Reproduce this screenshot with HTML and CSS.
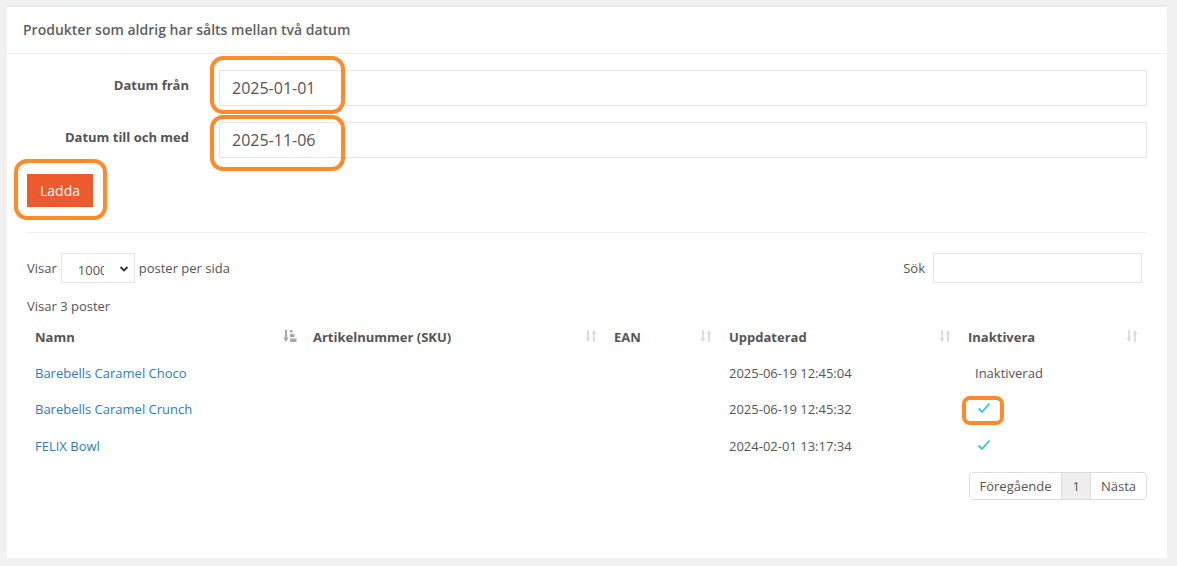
FILE: index.html
```html
<!DOCTYPE html>
<html lang="sv">
<head>
<meta charset="utf-8">
<title>Produkter som aldrig har sålts</title>
<link rel="stylesheet" href="styles.css">
</head>
<body>
<div class="portlet">
  <div class="portlet-title">Produkter som aldrig har sålts mellan två datum</div>
  <div class="portlet-body">
    <form class="form">
      <label class="form-label">Datum från</label>
      <div class="form-input">2025-01-01</div>
      <label class="form-label">Datum till och med</label>
      <div class="form-input">2025-11-06</div>
    </form>
    <div class="actions"><button class="btn" type="button">Ladda</button></div>
    <hr class="sep">
    <div class="toolbar">
      <div class="length">
        <span>Visar</span>
        <div class="select"><span class="select-val">1000</span>
          <svg class="chev" width="10" height="8" viewBox="0 0 10 8"><path d="M1.5 2 L5 5.5 L8.5 2" fill="none" stroke="#333" stroke-width="1.8"/></svg>
        </div>
        <span>poster per sida</span>
      </div>
      <div class="search"><span>Sök</span><div class="search-input"></div></div>
    </div>
    <div class="info">Visar 3 poster</div>
    <table class="table">
      <thead>
        <tr>
          <th class="c-name">Namn<svg class="sort active" width="14" height="14" viewBox="0 0 14 14"><path d="M3 1 V11" stroke="#a8a8a8" stroke-width="2.2"/><path d="M0.3 8.5 L3 13 L5.7 8.5 Z" fill="#a8a8a8"/><rect x="7" y="1" width="2.5" height="2.5" fill="#a8a8a8"/><rect x="7" y="5" width="4.5" height="3" fill="#a8a8a8"/><rect x="7" y="9.5" width="6.5" height="3.5" fill="#a8a8a8"/></svg></th>
          <th class="c-sku">Artikelnummer (SKU)<svg class="sort" width="14" height="14" viewBox="0 0 14 14"><path d="M4 1 V12" stroke="#ddd" stroke-width="2"/><path d="M1.5 9 L4 13 L6.5 9 Z" fill="#ddd"/><path d="M10 2 V13" stroke="#ddd" stroke-width="2"/><path d="M7.5 5 L10 1 L12.5 5 Z" fill="#ddd"/></svg></th>
          <th class="c-ean">EAN<svg class="sort" width="14" height="14" viewBox="0 0 14 14"><path d="M4 1 V12" stroke="#ddd" stroke-width="2"/><path d="M1.5 9 L4 13 L6.5 9 Z" fill="#ddd"/><path d="M10 2 V13" stroke="#ddd" stroke-width="2"/><path d="M7.5 5 L10 1 L12.5 5 Z" fill="#ddd"/></svg></th>
          <th class="c-upd">Uppdaterad<svg class="sort" width="14" height="14" viewBox="0 0 14 14"><path d="M4 1 V12" stroke="#ddd" stroke-width="2"/><path d="M1.5 9 L4 13 L6.5 9 Z" fill="#ddd"/><path d="M10 2 V13" stroke="#ddd" stroke-width="2"/><path d="M7.5 5 L10 1 L12.5 5 Z" fill="#ddd"/></svg></th>
          <th class="c-ina">Inaktivera<svg class="sort" width="14" height="14" viewBox="0 0 14 14"><path d="M4 1 V12" stroke="#ddd" stroke-width="2"/><path d="M1.5 9 L4 13 L6.5 9 Z" fill="#ddd"/><path d="M10 2 V13" stroke="#ddd" stroke-width="2"/><path d="M7.5 5 L10 1 L12.5 5 Z" fill="#ddd"/></svg></th>
        </tr>
      </thead>
      <tbody>
        <tr><td><a href="#">Barebells Caramel Choco</a></td><td></td><td></td><td>2025-06-19 12:45:04</td><td><span class="status">Inaktiverad</span></td></tr>
        <tr><td><a href="#">Barebells Caramel Crunch</a></td><td></td><td></td><td>2025-06-19 12:45:32</td><td><span class="status"><svg class="check" width="14" height="12" viewBox="0 0 14 12"><path d="M1.5 6.5 L5 10 L12.5 1.5" fill="none" stroke="#36c6d3" stroke-width="1.8"/></svg></span></td></tr>
        <tr><td><a href="#">FELIX Bowl</a></td><td></td><td></td><td>2024-02-01 13:17:34</td><td><span class="status"><svg class="check" width="14" height="12" viewBox="0 0 14 12"><path d="M1.5 6.5 L5 10 L12.5 1.5" fill="none" stroke="#36c6d3" stroke-width="1.8"/></svg></span></td></tr>
      </tbody>
    </table>
    <div class="pager">
      <div class="pagination"><span class="pg">Föregående</span><span class="pg cur">1</span><span class="pg">Nästa</span></div>
    </div>
  </div>
  <div class="annot a1"></div>
  <div class="annot a2"></div>
  <div class="annot a3"></div>
  <div class="annot a4"></div>
</div>
</body>
</html>
```
FILE: styles.css
```css
* { box-sizing: border-box; }
html, body { margin: 0; padding: 0; }
body {
  background: #f1f1f1;
  font-family: "Open Sans", "Liberation Sans", sans-serif;
  font-size: 13px;
  color: #555;
  height: 566px;
  overflow: hidden;
}
.portlet {
  position: relative;
  margin: 5px 0 0 7px;
  width: 1160px;
  height: 553px;
  background: #fff;
  border-top: 2px solid #e7ecf1;
}
.portlet-title {
  height: 47px;
  line-height: 46px;
  padding-left: 16px;
  font-size: 14px;
  font-weight: 600;
  color: #5f5f5f;
  border-bottom: 1px solid #eef1f5;
}
.portlet-body { padding: 16px 20px 0 20px; }
.form {
  display: grid;
  grid-template-columns: 162px 1fr;
  column-gap: 30px;
  row-gap: 16px;
  width: 1120px;
  margin: 0;
}
.form-label {
  text-align: right;
  font-weight: 700;
  font-size: 13px;
  color: #555;
  line-height: 30px;
}
.form-input {
  height: 36px;
  border: 1px solid #e5e5e5;
  padding: 0 12px;
  line-height: 34px;
  font-size: 16px;
  color: #555;
}
.actions { padding-top: 16px; }
.btn {
  background: #ec5a2e;
  color: #fff;
  border: 0;
  font-family: inherit;
  font-size: 14px;
  width: 66px;
  height: 33px;
  padding: 0;
  cursor: pointer;
}
.sep {
  margin: 25px 0 0 0;
  border: 0;
  border-top: 1px solid #eee;
  width: 1120px;
}
.toolbar {
  display: flex;
  justify-content: space-between;
  align-items: center;
  margin-top: 20px;
  width: 1115px;
}
.length { display: flex; align-items: center; gap: 4px; }
.select {
  position: relative;
  width: 74px;
  height: 30px;
  border: 1px solid #e5e5e5;
  display: flex;
  align-items: center;
}
.select-val {
  display: block;
  width: 26px;
  margin-left: 16px;
  margin-top: 3px;
  overflow: hidden;
  white-space: nowrap;
  font-size: 13px;
}
.chev { position: absolute; right: 5px; top: 11px; }
.search { display: flex; align-items: center; gap: 8px; }
.search-input { width: 209px; height: 30px; border: 1px solid #e5e5e5; }
.info { margin-top: 13px; line-height: 20px; }
.table {
  width: 1120px;
  border-collapse: collapse;
  margin-top: 3px;
}
.table th, .table td {
  text-align: left;
  padding: 0 8px;
  height: 36px;
  vertical-align: middle;
  font-size: 13px;
}
.table tbody tr:last-child td { height: 37px; }
.table th {
  font-weight: 700;
  color: #555;
  position: relative;
  padding-right: 30px;
}
.c-name { width: 278px; }
.c-sku { width: 301px; }
.c-ean { width: 115px; }
.c-upd { width: 239px; }
.sort { position: absolute; right: 8px; top: 10px; }
.table a { color: #337ab7; text-decoration: none; }
.status { display: inline-block; padding-left: 7px; }
.check { display: block; margin-left: 2px; }
.pager { display: flex; justify-content: flex-end; width: 1120px; margin-top: 8px; }
.pagination { display: flex; border: 1px solid #ddd; border-radius: 4px; overflow: hidden; }
.pg {
  display: block;
  height: 26px;
  line-height: 26px;
  padding: 0 10px;
  color: #555;
  border-left: 1px solid #ddd;
}
.pg:first-child { border-left: 0; }
.pg.cur { background: #eee; padding: 0 10px; }
.annot {
  position: absolute;
  border: 4px solid #ff8a2a;
  border-radius: 13px;
}
.a1 { left: 203px; top: 49px; width: 135px; height: 58px; }
.a2 { left: 203px; top: 108px; width: 135px; height: 56px; }
.a3 { left: 7px; top: 152px; width: 93px; height: 61px; }
.a4 { left: 955px; top: 389px; width: 42px; height: 29px; border-radius: 8px; }
```
